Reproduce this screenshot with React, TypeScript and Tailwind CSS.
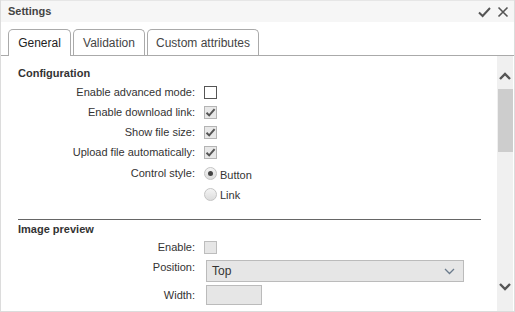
import React from 'react';

const font = { fontFamily: '"Liberation Sans", Arial, sans-serif' };

function Check({ checked, disabled }: { checked?: boolean; disabled?: boolean }) {
  if (checked) {
    return (
      <span className="flex h-[13px] w-[13px] items-center justify-center border border-[#b4b4b4] bg-[#e8e8e8]">
        <svg width="11" height="11" viewBox="0 0 11 11">
          <path d="M1.5 5.8 L4.2 8.4 L9.6 2.2" fill="none" stroke="#555" strokeWidth="2" />
        </svg>
      </span>
    );
  }
  if (disabled) {
    return <span className="block h-[13px] w-[13px] border border-[#bdbdbd] bg-[#e6e6e6]" />;
  }
  return <span className="block h-[13px] w-[13px] border border-[#555] bg-white" />;
}

function Radio({ on }: { on?: boolean }) {
  return (
    <span className="flex h-[13px] w-[13px] items-center justify-center rounded-full border border-[#c4c4c4] bg-gradient-to-b from-[#f4f4f4] to-[#dcdcdc]">
      {on && <span className="block h-[5px] w-[5px] rounded-full bg-[#444]" />}
    </span>
  );
}

function Row({ label, children, h = 'h-[20px]' }: { label: string; children: React.ReactNode; h?: string }) {
  return (
    <div className={`flex items-center ${h}`}>
      <div className="w-[195px] pr-[1px] text-right">{label}</div>
      <div className="ml-[8px] flex items-center">{children}</div>
    </div>
  );
}

export default function App() {
  return (
    <div style={font} className="flex h-[312px] w-[515px] flex-col border border-t-0 border-[#dcdcdc] text-[11px] text-[#333]">
      <div className="flex h-[22px] items-center justify-between border-t border-[#e6e6e6] bg-[#f6f6f6] pl-[7px] pr-[5px]">
        <span className="font-bold text-[#444]">Settings</span>
        <div className="flex items-center gap-[6px]">
          <svg width="13" height="12" viewBox="0 0 13 12">
            <path d="M1 6.5 L4.6 10 L12 2" fill="none" stroke="#555" strokeWidth="2" />
          </svg>
          <svg width="12" height="12" viewBox="0 0 12 12">
            <path d="M1.5 1.5 L10.5 10.5 M10.5 1.5 L1.5 10.5" fill="none" stroke="#555" strokeWidth="1.6" />
          </svg>
        </div>
      </div>

      <div className="flex h-[34px] items-end gap-[2px] border-b border-[#aaa] pl-[7px]">
        <div className="-mb-px flex h-[27px] w-[63px] items-center justify-center rounded-t-[5px] border border-b-0 border-[#aaa] bg-white pb-[1px] text-[12px] text-[#222]">
          General
        </div>
        <div className="flex h-[26px] w-[72px] items-center justify-center rounded-t-[5px] border border-b-0 border-[#aaa] bg-white text-[12px] text-[#444]">
          Validation
        </div>
        <div className="flex h-[26px] w-[112px] items-center justify-center rounded-t-[5px] border border-b-0 border-[#aaa] bg-white text-[12px] text-[#444]">
          Custom attributes
        </div>
      </div>

      <div className="flex min-h-0 flex-1">
        <div className="flex-1 overflow-hidden pt-[8px]">
          <div className="pl-[17px] font-bold leading-[18px]">Configuration</div>
          <div className="pr-[17px]">
            <Row label="Enable advanced mode:"><Check /></Row>
            <Row label="Enable download link:"><Check checked /></Row>
            <Row label="Show file size:"><Check checked /></Row>
            <Row label="Upload file automatically:"><Check checked /></Row>
            <div className="flex h-[22px] items-center">
              <div className="w-[195px] pr-[1px] text-right">Control style:</div>
              <div className="ml-[8px] flex items-center gap-[3px]">
                <Radio on />
                <span className="mt-[4px]">Button</span>
              </div>
            </div>
            <div className="flex h-[21px] items-center">
              <div className="w-[195px]" />
              <div className="ml-[8px] flex items-center gap-[3px]">
                <Radio />
                <span className="mt-[2px]">Link</span>
              </div>
            </div>
          </div>

          <div className="ml-[17px] mr-[16px] mt-[14px] border-t border-[#666]" />
          <div className="pl-[17px] pt-[1px] font-bold leading-[16px]">Image preview</div>
          <div className="pr-[17px]">
            <Row label="Enable:"><Check disabled /></Row>
            <div className="mt-[3px] flex h-[22px]">
              <div className="w-[195px] pr-[1px] text-right leading-[14px]">Position:</div>
              <div className="ml-[10px] flex h-[22px] w-[258px] items-center justify-between border border-[#bbb] bg-[#e6e6e6] pl-[5px] pr-[8px] text-[12px] text-[#333]">
                <span>Top</span>
                <svg width="11" height="7" viewBox="0 0 11 7">
                  <path d="M1 1 L5.5 5.5 L10 1" fill="none" stroke="#6b7b8c" strokeWidth="1.3" />
                </svg>
              </div>
            </div>
            <div className="mt-[3px] flex h-[20px] items-center">
              <div className="w-[195px] pr-[1px] text-right">Width:</div>
              <div className="ml-[10px] h-[20px] w-[56px] border border-[#bbb] bg-[#e6e6e6]" />
            </div>
          </div>
        </div>

        <div className="mr-[1px] flex w-[16px] flex-col items-center bg-[#f0f0f0]">
          <svg className="mt-[16px]" width="12" height="8" viewBox="0 0 12 8">
            <path d="M1 7 L6 2 L11 7" fill="none" stroke="#555" strokeWidth="2.4" />
          </svg>
          <div className="mt-[9px] h-[63px] w-[15px] bg-[#cdcdcd]" />
          <div className="flex-1" />
          <svg className="mb-[20px]" width="12" height="8" viewBox="0 0 12 8">
            <path d="M1 1 L6 6 L11 1" fill="none" stroke="#555" strokeWidth="2.4" />
          </svg>
        </div>
      </div>
    </div>
  );
}
